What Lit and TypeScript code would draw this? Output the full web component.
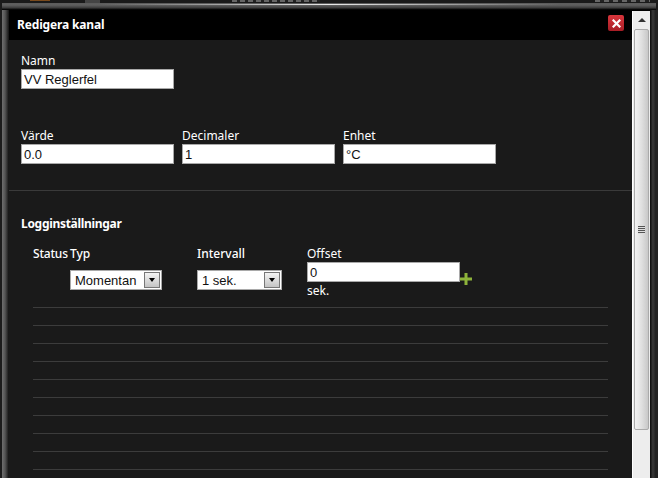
import { LitElement, html, css } from "lit";
import { customElement } from "lit/decorators.js";

@customElement("app-root")
export class AppRoot extends LitElement {
  static styles = css`
    :host { display: block; width: 658px; height: 478px; overflow: hidden; background: #111; font-family: "Noto Sans", "Open Sans", sans-serif; }
    .top {
      height: 10px; box-sizing: border-box;
      background:
        linear-gradient(90deg, transparent 100px, #e8e8e8 330px, transparent 560px) 0 4px / 100% 1px no-repeat,
        linear-gradient(#7a4a1c, #7a4a1c) 30px 0 / 20px 1px no-repeat,
        linear-gradient(#444, #444) 85px 0 / 15px 3px no-repeat,
        repeating-linear-gradient(90deg, #666 0 5px, #222 5px 8px) 232px 0 / 88px 2px no-repeat,
        repeating-linear-gradient(90deg, #666 0 5px, #222 5px 9px) 595px 0 / 55px 2px no-repeat,
        linear-gradient(90deg, #1a1a1a 0 2px, transparent 2px) 0 0 / 100% 100% no-repeat,
        linear-gradient(90deg, transparent 656px, #1a1a1a 656px) 0 0 / 100% 100% no-repeat,
        linear-gradient(#1a1a1a 0, #1a1a1a 3px, #5c5c5c 3.5px, #606060 5px, #3a3a3a 8px, #111 9px, #000 10px);
    }
    .body { display: flex; height: 468px; }
    .side { width: 9px; flex: none; background: linear-gradient(90deg, #1c1c1c 0, #1c1c1c 2px, #6a6a6a 2.5px, #555 5px, #333 7px, #111 9px); }
    .side.right { width: 8px; background: linear-gradient(90deg, #111 0, #111 1px, #333 2px, #333 4px, #222 5px, #222 8px); }
    .content { flex: 1; min-width: 0; background: #1a1a1a; color: #fff; overflow: hidden; }
    .title { height: 30px; background: #000; display: flex; align-items: center; justify-content: space-between; padding: 0 8px; font-size: 12px; font-weight: 700; letter-spacing: -0.15px; }
    .title > span:first-child { margin-top: -2px; }
    .close { width: 16px; height: 16px; border-radius: 2px; background: linear-gradient(#d8363c, #a81e26); display: flex; align-items: center; justify-content: center; margin-top: -4px; }
    label, .lbl { display: block; font-size: 12px; line-height: 14px; color: #fff; }
    .form { padding: 14px 12px 0; }
    .row { display: flex; gap: 8px; }
    .field { width: 153px; }
    .name { height: 75px; }
    .vals { height: 61px; }
    input, .select { box-sizing: border-box; display: block; background: #fff; border: 1px solid #a9a9a9; height: 20px; width: 153px; margin: 1px 0 0; padding: 1px 2px 0; font: 13px "Liberation Sans", Arial, sans-serif; color: #111; outline: none; }
    hr { border: 0; border-top: 1px solid #3a3a3a; margin: 0; }
    .log { padding: 25px 12px 0; }
    h3 { margin: 0; font-size: 12px; line-height: 16px; font-weight: 700; letter-spacing: -0.3px; }
    .cols { display: flex; margin: 15px 0 0 12px; height: 60px; }
    .status { width: 37px; letter-spacing: -0.2px; }
    .typ { width: 127px; }
    .int { width: 110px; }
    .cols .lbl { font-weight: 500; }
    .select { display: flex; align-items: center; justify-content: space-between; padding: 0 1px 0 4px; margin-top: 9px; }
    .s1 { width: 92px; }
    .s2 { width: 85px; }
    .arrow { width: 16px; height: 16px; box-sizing: border-box; border: 1px solid #777; background: linear-gradient(#f4f4f4, #c4c4c4); display: flex; align-items: center; justify-content: center; }
    .arrow i { width: 0; height: 0; border: 3.5px solid transparent; border-top: 4px solid #000; border-bottom: 0; }
    .offset { width: 165px; }
    .offset .line { display: flex; align-items: flex-end; margin-top: 1px; }
    .offset input { margin: 0; }
    .offset svg { display: block; flex: none; margin-bottom: -3px; }
    .offset .lbl { font-weight: 400; }
    .sek { margin-top: 2px; }
    .lines { margin-left: 12px; width: 575px; }
    .lines div { height: 18px; box-sizing: border-box; border-top: 1px solid #3c3c3c; }
    .main { flex: 1; min-width: 0; }
    .pane { display: flex; height: 468px; }
    .scrollbox { width: 18px; flex: none; background: #000; padding-top: 1px; box-sizing: border-box; }
    .scroll { width: 18px; height: 467px; background: #ededed; border-left: 1px solid #fff; box-sizing: border-box; display: flex; flex-direction: column; align-items: center; }
    .up { height: 18px; flex: none; display: flex; align-items: center; justify-content: center; }
    .up i { width: 0; height: 0; border: 4px solid transparent; border-bottom: 4px solid #333; border-top: 0; }
    .thumb { width: 15px; height: 401px; flex: none; box-sizing: border-box; border: 1px solid #aaa; border-radius: 2px; background: linear-gradient(90deg, #f2f2f2, #e0e0e0 50%, #c8c8c8); display: flex; flex-direction: column; align-items: center; justify-content: center; gap: 1px; }
    .thumb b { display: block; width: 7px; height: 1px; background: #555; box-shadow: 0 1px 0 #ddd; }
  `;

  render() {
    return html`
      <div class="top"></div>
      <div class="body">
        <div class="side"></div>
        <div class="content">
          <div class="pane">
            <div class="main">
              <div class="title">
                <span>Redigera kanal</span>
                <span class="close">
                  <svg width="9" height="9" viewBox="0 0 9 9"><path d="M1.5 1.5 7.5 7.5M7.5 1.5 1.5 7.5" stroke="#fff" stroke-width="2.2" stroke-linecap="square"/></svg>
                </span>
              </div>
              <div class="form">
                <div class="name">
                  <div class="field"><label>Namn</label><input value="VV Reglerfel" /></div>
                </div>
                <div class="row vals">
                  <div class="field"><label>Värde</label><input value="0.0" /></div>
                  <div class="field"><label>Decimaler</label><input value="1" /></div>
                  <div class="field"><label>Enhet</label><input value="°C" /></div>
                </div>
              </div>
              <hr />
              <div class="log">
                <h3>Logginställningar</h3>
                <div class="cols">
                  <div class="status lbl">Status</div>
                  <div class="typ">
                    <div class="lbl">Typ</div>
                    <div class="select s1">Momentan<span class="arrow"><i></i></span></div>
                  </div>
                  <div class="int">
                    <div class="lbl">Intervall</div>
                    <div class="select s2">1 sek.<span class="arrow"><i></i></span></div>
                  </div>
                  <div class="offset">
                    <div class="lbl">Offset</div>
                    <div class="line">
                      <input value="0" />
                      <svg width="12" height="12" viewBox="0 0 12 12"><path d="M4.5 0h3v4.5H12v3H7.5V12h-3V7.5H0v-3h4.5z" fill="#8db33a"/></svg>
                    </div>
                    <div class="lbl sek">sek.</div>
                  </div>
                </div>
                <div class="lines">
                  ${Array.from({ length: 11 }, () => html`<div></div>`)}
                </div>
              </div>
            </div>
            <div class="scrollbox">
              <div class="scroll">
                <div class="up"><i></i></div>
                <div class="thumb"><b></b><b></b><b></b><b></b></div>
              </div>
            </div>
          </div>
        </div>
        <div class="side right"></div>
      </div>
    `;
  }
}
